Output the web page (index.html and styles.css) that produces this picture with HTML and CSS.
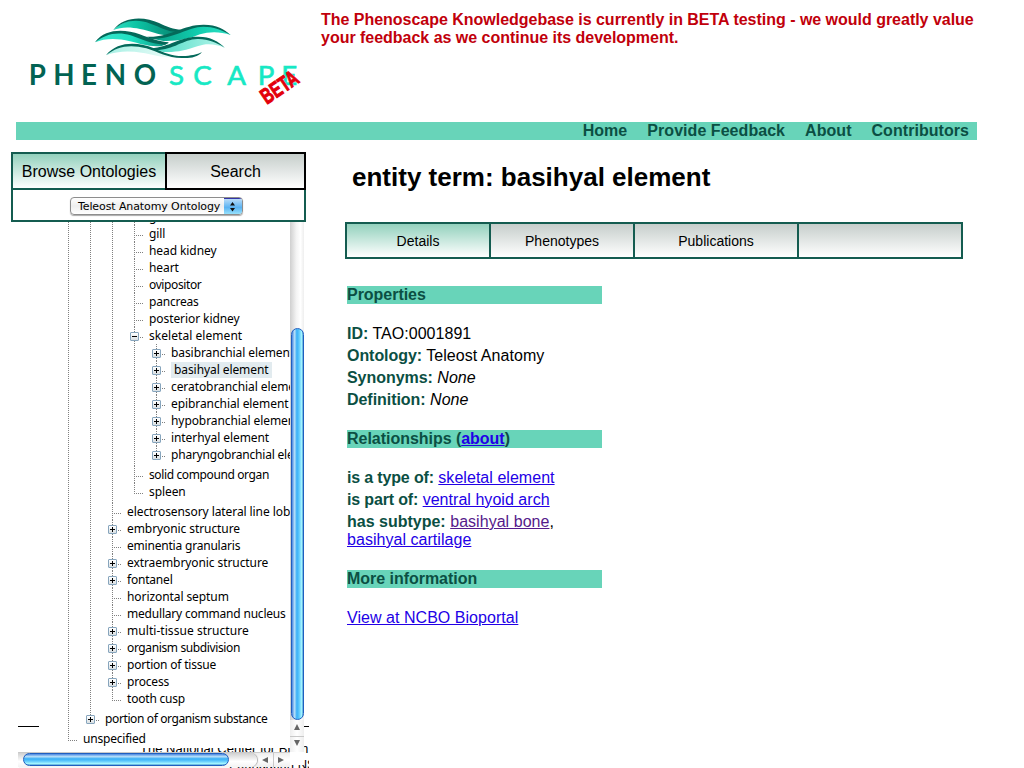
FILE: index.html
```html
<!DOCTYPE html>
<html lang="en">
<head>
<meta charset="utf-8">
<title>Phenoscape Knowledgebase</title>
<link rel="stylesheet" href="styles.css">
</head>
<body>
<div class="page">
  <header class="header">
    <svg class="logo" viewBox="0 0 960 360" width="320" height="120">
      <defs>
        <linearGradient id="deep" x1="0" y1="0" x2="1" y2="0"><stop offset="0" stop-color="#2fdcc0"/><stop offset=".35" stop-color="#0cc4a4"/><stop offset="1" stop-color="#07806d"/></linearGradient>
        <linearGradient id="deep2" x1="0" y1="0" x2="1" y2="0"><stop offset="0" stop-color="#0a9883"/><stop offset=".6" stop-color="#10cdae"/><stop offset="1" stop-color="#2fe0c4"/></linearGradient>
        <linearGradient id="mint" x1="0" y1="0" x2="1" y2="0"><stop offset="0" stop-color="#3be6cc"/><stop offset=".5" stop-color="#1fe0c2"/><stop offset="1" stop-color="#0a917d"/></linearGradient>
        <linearGradient id="pale" x1="0" y1="0" x2="1" y2="0"><stop offset="0" stop-color="#4fdcc6"/><stop offset="1" stop-color="#b4f5ea"/></linearGradient>
        <linearGradient id="mist" x1="0" y1="0" x2="1" y2="0"><stop offset="0" stop-color="#a6f0e4"/><stop offset="1" stop-color="#eefcf9"/></linearGradient>
      </defs>
      <path fill="url(#mist)" d="M318 166C350 128 407 124 452 146C482 159 500 167 520 172C480 173 455 161 425 158C388 152 350 153 318 166Z"/>
      <path fill="url(#deep)" d="M340 90C370 57 432 50 470 71C492 81 515 90 541 91L522 103C485 112 460 94 420 87C390 80 362 81 340 90Z"/>
      <path fill="url(#deep2)" d="M445 114C518 116 548 77 610 77C645 77 670 88 692 105C660 94 628 94 600 103C565 117 535 124 490 123Z"/>
      <path fill="url(#mint)" d="M285 127C323 89 370 92 407 104C436 116 467 127 506 130L485 138C445 141 420 131 390 124C350 113 313 115 285 127Z"/>
      <path fill="url(#pale)" d="M465 148C512 140 543 112 594 112C628 111 657 126 674 143C646 132 620 129 592 139C555 151 530 158 490 156Z"/>
      <g fill="#04695a">
        <path d="M340 90C370 47 435 49 477 69C503 81 520 88 543 89L530 95C503 96 482 81 451 71C410 55 370 62 340 90Z"/>
        <path d="M441 110C510 113 549 73 612 74C650 74 673 88 692 105C666 90 640 80 610 80C560 81 522 118 452 116Z"/>
        <path d="M285 127C317 84 375 88 419 103C450 115 477 125 507 127L495 134C455 133 425 117 392 106C350 93 313 104 285 127Z"/>
        <path d="M452 145C510 141 540 110 592 110C629 109 656 124 674 143C649 127 622 116 592 117C549 118 522 150 468 150Z"/>
        <path d="M318 166C353 121 417 127 460 144C496 160 518 170 557 168C580 166 594 162 606 157C592 173 570 175 545 174C502 174 475 156 439 145C391 132 351 138 318 166Z"/>
      </g>
      <g class="word"><text class="dark" y="256" x="86 160 243 314 401">PHENO</text><text class="light" y="256" x="507 580 682 773 844">SCAPE</text></g>
      <text class="beta" transform="translate(800 314) rotate(-34) scale(.7 1)">BETA</text>
    </svg>
    <p class="notice">The Phenoscape Knowledgebase is currently in BETA testing - we would greatly value your feedback as we continue its development.</p>
  </header>
  <nav class="nav"><a>Home</a><a>Provide Feedback</a><a>About</a><a>Contributors</a></nav>

  <div class="columns">
    <aside class="sidebar">
      <div class="panel">
        <div class="side-tabs"><div class="side-tab active">Browse Ontologies</div><div class="side-tab search">Search</div></div>
        <div class="picker"><div class="select"><span class="choice">Teleost Anatomy Ontology</span><span class="arrows"><svg width="17" height="16" viewBox="0 0 17 16"><path d="M6 6.500L8.500 3L11 6.500ZM6 9L8.500 12.500L11 9Z" fill="#111"/></svg></span></div></div>
      </div>
      <div class="browser">
        <div class="tree">
          <ul class="root">
            <li><ul>
              <li><ul>
                <li><ul>
                  <li><div class="row">gas bladder</div></li>
                  <li><div class="row">gill</div></li>
                  <li><div class="row">head kidney</div></li>
                  <li><div class="row">heart</div></li>
                  <li><div class="row tight">ovipositor</div></li>
                  <li><div class="row snug">pancreas</div></li>
                  <li><div class="row">posterior kidney</div></li>
                  <li><div class="row node open wide">skeletal element</div>
                    <ul>
                      <li><div class="row node">basibranchial element</div></li>
                      <li><div class="row node"><span class="selected">basihyal element</span></div></li>
                      <li><div class="row node">ceratobranchial element</div></li>
                      <li><div class="row node">epibranchial element</div></li>
                      <li><div class="row node">hypobranchial element</div></li>
                      <li><div class="row node">interhyal element</div></li>
                      <li><div class="row node snug">pharyngobranchial element</div></li>
                    </ul></li>
                  <li><div class="row tight">solid compound organ</div></li>
                  <li><div class="row">spleen</div></li>
                </ul></li>
                <li><div class="row">electrosensory lateral line lobe</div></li>
                <li><div class="row node">embryonic structure</div></li>
                <li><div class="row snug">eminentia granularis</div></li>
                <li><div class="row node">extraembryonic structure</div></li>
                <li><div class="row node snug">fontanel</div></li>
                <li><div class="row">horizontal septum</div></li>
                <li><div class="row snug">medullary command nucleus</div></li>
                <li><div class="row node wide">multi-tissue structure</div></li>
                <li><div class="row node tight">organism subdivision</div></li>
                <li><div class="row node snug">portion of tissue</div></li>
                <li><div class="row node snug">process</div></li>
                <li><div class="row snug">tooth cusp</div></li>
              </ul></li>
              <li><div class="row node tight">portion of organism substance</div></li>
            </ul></li>
            <li><div class="row snug">unspecified</div></li>
          </ul>
        </div>
        <div class="vbar">
          <div class="vthumb"></div>
          <svg class="vbuttons" width="14" height="33" viewBox="0 0 14 33"><path d="M0 16.500H14" stroke="#c8c8c8"/><path d="M4 10L7 4L10 10ZM4 20L7 26L10 20Z" fill="#666"/></svg>
        </div>
        <div class="hbar">
          <div class="htrack"><div class="hthumb"></div></div>
          <svg width="33" height="14" viewBox="0 0 33 14"><path d="M16.500 0V14" stroke="#c8c8c8"/><path d="M11 4L5 7L11 10ZM21 4L27 7L21 10Z" fill="#666"/></svg>
        </div>
        <div class="corner"></div>
      </div>
    </aside>

    <main class="main">
      <h1>entity term: basihyal element</h1>
      <div class="tabs"><div class="tab active">Details</div><div class="tab">Phenotypes</div><div class="tab">Publications</div><div class="tab"></div></div>
      <section class="details">
        <h2>Properties</h2>
        <div class="facts">
          <p><b>ID:</b> TAO:0001891</p>
          <p><b>Ontology:</b> Teleost Anatomy</p>
          <p><b>Synonyms:</b> <i>None</i></p>
          <p><b>Definition:</b> <i>None</i></p>
        </div>
        <h2>Relationships (<a href="#">about</a>)</h2>
        <div class="facts links">
          <p><b>is a type of:</b> <a href="#">skeletal element</a></p>
          <p><b>is part of:</b> <a href="#">ventral hyoid arch</a></p>
          <p><b class="sub">has subtype:</b> <a href="#" class="seen">basihyal bone</a>, <a href="#">basihyal cartilage</a></p>
        </div>
        <h2>More information</h2>
        <div class="facts"><p><a href="#">View at NCBO Bioportal</a></p></div>
      </section>
    </main>
  </div>
  <footer class="footer"><p>The National Center for Biom</p><p class="second">Foundation NS2</p></footer>
</div>
</body>
</html>
```
FILE: styles.css
```css
*, *::before { box-sizing: border-box; }
body { margin: 0; background: #fff; color: #000; font: 16px/18px "Liberation Sans", Arial, sans-serif; }
h1, h2, p, ul { margin: 0; padding: 0; }
ul { list-style: none; }
.page { position: relative; width: 1024px; height: 768px; overflow: hidden; }

.header { display: flex; height: 122px; }
.logo { flex: none; }
.word { font: 700 83px Lato, sans-serif; }
.word .dark { fill: #026353; }
.word .light { fill: #17e8c4; font-weight: 400; stroke: #17e8c4; stroke-width: 2; }
.beta { font: 700 66px "Liberation Sans Narrow", "Liberation Sans", sans-serif; fill: #e3000b; stroke: #e3000b; stroke-width: 3; }
.notice { width: 670px; padding: 11px 0 0 1px; color: #c1000b; font-weight: 700; letter-spacing: -.02px; }

.nav { display: flex; justify-content: flex-end; gap: 20px; width: 961px; height: 18px; margin-left: 16px; padding-right: 8px; background: #68d4b9; color: #0b4f43; font-weight: 700; letter-spacing: .05px; }

.columns { display: flex; padding: 12px 0 0 11px; }
.sidebar { position: relative; z-index: 1; flex: none; width: 295px; }
.panel { height: 70px; border: 2px solid #145c50; border-top: 0; background: #fff; }
.side-tabs { display: flex; margin: 0 -2px; height: 38px; }
.side-tab { display: flex; align-items: center; justify-content: center; border: 2px solid #145c50; width: 154px; border-right: 0; padding-top: 1px; background: linear-gradient(#93d1bd, #fff); }
.side-tab.search { width: 141px; border: 2px solid #000; background: linear-gradient(#c6cecb, #fff); }
.picker { display: flex; justify-content: center; padding: 7px 4px 0 0; }
.select { display: flex; width: 173px; height: 18px; border: 1px solid #8d8d8d; border-radius: 4px; overflow: hidden; background: linear-gradient(#fff, #eee 50%, #fff); box-shadow: 0 1px 1px #aaa; font: 11px/17px "DejaVu Sans", sans-serif; }
.choice { flex: 1; padding-left: 7px; white-space: nowrap; letter-spacing: -.1px; }
.arrows { width: 18px; height: 18px; border-top: 1px solid #3434a8; background: linear-gradient(#b9dcf8, #5bb3f2 50%, #a8efff); }
.arrows svg { display: block; }

.browser { display: grid; grid-template-columns: 272px 14px; grid-template-rows: 530px 15px; margin-left: 7px; width: 286px; }
.tree { height: 526px; margin-left: 21px; padding-left: 29px; overflow: hidden; background: #fff; font: 12px/17px "Noto Sans", sans-serif; white-space: nowrap; letter-spacing: -.08px; }
.root { margin-top: -14px; }
.tree ul ul { padding: 0 0 3px 22px; }
.tree li { background: repeating-linear-gradient(#808080 0 1px, #fff 1px 2px) 0 0 / 1px 100% no-repeat; }
.tree li:last-child { background-size: 1px 10px; }
.row { height: 17px; padding-left: 15px; background: repeating-linear-gradient(90deg, #808080 0 1px, #fff 1px 2px) 0 10px / 9px 1px no-repeat; }
.wide { letter-spacing: .05px; }
.snug { letter-spacing: -.2px; }
.tight { letter-spacing: -.38px; }
.node::before { content: ""; float: left; width: 9px; height: 9px; margin: 5px 10px 0 -19px; border: 1px solid #87a5bd; border-radius: 1px; background: linear-gradient(#000, #000) center / 5px 1px no-repeat, linear-gradient(#000, #000) center / 1px 5px no-repeat, linear-gradient(#fff, #d9dfe2); }
.node.open::before { background: linear-gradient(#000, #000) center / 5px 1px no-repeat, linear-gradient(#fff, #d9dfe2); }
.selected { display: inline-block; height: 16px; line-height: 16px; padding: 0 3px; background: #e2ebef; }
.vbar { height: 530px; padding-top: 106px; background: linear-gradient(90deg, #cfcfcf, #f3f3f3 45%, #fff 75%, #eee); }
.vthumb { height: 392px; margin-left: 1px; border: 1px solid #1f5fc0; border-radius: 7px; background: linear-gradient(90deg, #4a86e0, #b6e0fa 24%, #38aff6 44%, #5dc8fc 64%, #a5f6ff 88%, #4b9bd2); }
.vbuttons { display: block; background: linear-gradient(90deg, #eee, #fff 50%, #eee); }
.hbar { display: flex; width: 272px; height: 15px; border-top: 1px solid #ccc; background: linear-gradient(#eee, #fff 50%, #eee); }
.htrack { width: 239px; height: 14px; padding-left: 5px; border-radius: 0 8px 8px 0; background: linear-gradient(#d0d0d0, #fff 60%, #f3f3f3); box-shadow: 1px 0 1px #aaa; }
.hthumb { width: 206px; height: 13px; border: 1px solid #1f5fc0; border-radius: 7px; background: linear-gradient(#4a86e0, #b6e0fa 24%, #38aff6 44%, #5dc8fc 64%, #a5f6ff 88%, #4b9bd2); }
.corner { height: 13px; background: #fff; }

.main { padding-left: 39px; }
h1 { padding: 10px 0 0 7px; font-size: 26px; line-height: 30px; height: 70px; }
.tabs { display: grid; grid-template-columns: 146px 144px 164px 164px; width: 618px; height: 37px; border: solid #145c50; border-width: 2px 0; font-size: 14px; }
.tab { display: flex; align-items: center; justify-content: center; border-right: 2px solid #145c50; background: linear-gradient(#c6cecb, #fff); }
.tab.active { border-left: 2px solid #145c50; background: linear-gradient(#93d1bd, #fff); }
.details { width: 257px; padding: 27px 0 0 2px; }
h2, .details b { color: #0b4f43; }
h2 { height: 18px; margin-right: 2px; background: #68d4b9; font-size: 16px; line-height: 18px; letter-spacing: -.03px; }
.details h2 { margin-right: 0; }
.facts { display: flex; flex-direction: column; gap: 4px; padding: 21px 0; letter-spacing: .04px; }
.facts b { letter-spacing: -.05px; }
.links b { letter-spacing: -.16px; }
.links .sub { letter-spacing: 0; }
a[href] { color: #2200e6; text-decoration: underline; }
a.seen[href] { color: #551a8b; }

.footer { position: absolute; left: 18px; top: 726px; width: 291px; height: 42px; overflow: hidden; border-top: 1px solid #000; white-space: nowrap; font-size: 13px; }
.footer p { padding: 14px 0 0 122px; line-height: 16px; }
.footer .second { padding: 0 0 0 211px; }
```
